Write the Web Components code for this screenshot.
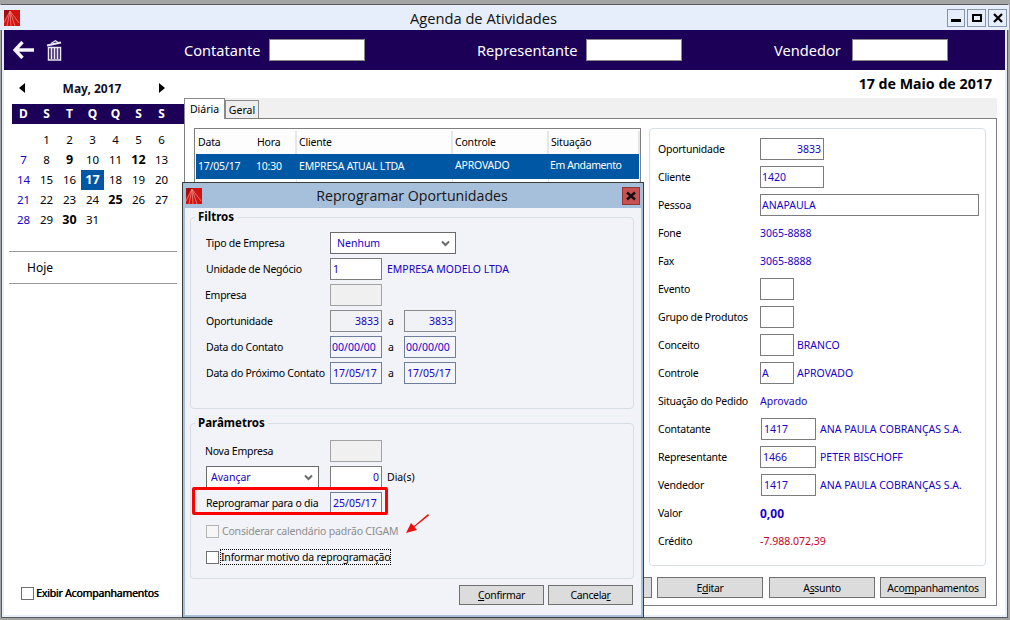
<!DOCTYPE html>
<html lang="pt">
<head>
<meta charset="utf-8">
<title>Agenda de Atividades</title>
<style>
  html, body { margin: 0; height: 100%; overflow: hidden; }
  body { background: #a4a4a4; font: 10.500px "Noto Sans", "Liberation Sans", sans-serif; color: #000; }
</style>
</head>
<body>
<app-window></app-window>
<script>
// Base: semua elemen pakai shadow root open
class Base extends HTMLElement {
  constructor() {
    super();
    this.attachShadow({ mode: 'open' });
  }
  connectedCallback() {
    this.shadowRoot.innerHTML = `<style>${this.css()}</style>${this.html()}`;
  }
  css() { return ''; }
  html() { return '<slot></slot>'; }
}

const BLUE = '#1a00c4';

class WinLogo extends Base {
  css() { return `:host { display: block; width: 16px; height: 16px; } svg { display: block; }`; }
  html() {
    return `<svg width="16" height="16" viewBox="0 0 16 16">
      <rect width="16" height="16" fill="#d2120f"/>
      <path d="M0 0h7L0 9z" fill="#a00e0e"/>
      <path d="M6 1 0 13M6 1 3 16M6 1 7 16M6 1l5 15M6 1l9 12" stroke="#ee8a84" stroke-width=".8" fill="none"/>
    </svg>`;
  }
}
customElements.define('win-logo', WinLogo);

class TextBox extends Base {
  css() {
    const a = n => this.getAttribute(n);
    return `:host {
        display: inline-flex; align-items: center; box-sizing: border-box; flex: none;
        width: ${a('w') || 52}px; height: 22px; padding: 0 ${a('pad') || 2}px;
        border: 1px solid ${a('edge') || '#7c7c7c'};
        background: ${a('bg') || '#fff'}; color: ${BLUE};
        justify-content: ${a('align') === 'right' ? 'flex-end' : 'flex-start'};
      }`;
  }
  html() { return `<span>${this.getAttribute('value') || ''}</span>`; }
}
customElements.define('text-box', TextBox);

class ComboBox extends Base {
  css() {
    return `:host {
        display: inline-flex; align-items: center; justify-content: space-between; box-sizing: border-box; flex: none;
        width: ${this.getAttribute('w')}px; height: 22px; padding: 0 5px 0 4px;
        border: 1px solid #6a6a6a; background: #fff; color: ${BLUE};
      }
      svg { display: block; }`;
  }
  html() {
    return `<span>${this.getAttribute('value')}</span>
      <svg width="9" height="7" viewBox="0 0 9 7"><path d="M1 1.500 4.500 5 8 1.500" fill="none" stroke="#6a6a6a" stroke-width="2"/></svg>`;
  }
}
customElements.define('combo-box', ComboBox);

class CheckBox extends Base {
  css() {
    const off = this.hasAttribute('off');
    return `:host { display: inline-flex; align-items: center; gap: ${off ? 3 : 2}px; color: ${off ? '#8e8e8e' : 'inherit'}; letter-spacing: -.2px; }
      i { display: block; box-sizing: border-box; width: 13px; height: 13px; background: ${off ? '#f6f6f6' : '#fff'}; border: 1px solid ${off ? '#b4b4b4' : '#707070'}; }
      span { ${this.hasAttribute('focus') ? 'outline: 1px dotted #000; outline-offset: 0;' : ''} }`;
  }
  html() { return `<i></i><span><slot></slot></span>`; }
}
customElements.define('check-box', CheckBox);

class PushButton extends Base {
  css() {
    return `:host {
        display: inline-flex; align-items: center; justify-content: center; box-sizing: border-box; flex: none;
        width: ${this.getAttribute('w')}px; height: ${this.getAttribute('h') || 21}px;
        background: #dcdcdc; border: 1px solid #707070; color: #000; letter-spacing: -.35px;
      }`;
  }
}
customElements.define('push-button', PushButton);

class TitleBar extends Base {
  css() {
    return `:host { display: flex; align-items: center; height: 25px; padding: 0 2px 0 4px; background: #e6eefb; }
      .title { flex: 1; text-align: center; font: 14.700px "Open Sans", "Noto Sans", sans-serif; color: #111; }
      .btns { display: flex; gap: 2px; }
      .btn { box-sizing: border-box; width: 19px; height: 18px; border: 1px solid #8494aa; display: flex; align-items: center; justify-content: center; }
      .btn:first-child { width: 18px; }
      svg { display: block; }`;
  }
  html() {
    return `<win-logo></win-logo>
      <div class="title">Agenda de Atividades</div>
      <div class="btns">
        <div class="btn"><svg width="10" height="10"><rect x="0" y="6" width="10" height="3"/></svg></div>
        <div class="btn"><svg width="10" height="10"><path d="M1 2h8v6H1z" fill="none" stroke="#000" stroke-width="2"/></svg></div>
        <div class="btn"><svg width="10" height="10"><path d="M1 1l8 8M9 1 1 9" stroke="#000" stroke-width="2.200"/></svg></div>
      </div>`;
  }
}
customElements.define('title-bar', TitleBar);

class TopBar extends Base {
  css() {
    return `:host { display: grid; grid-template-columns: 180px 293px 297px 1fr; align-items: center; height: 40px; background: #1c0057; color: #fff; font-size: 14.600px; }
      .icons { display: flex; align-items: center; gap: 12px; padding-left: 9px; }
      .group { display: flex; align-items: center; }
      .box { box-sizing: border-box; width: 96px; height: 22px; background: #fff; border: 1px solid #8a8a8a; }
      svg { display: block; }`;
  }
  html() {
    return `<div class="icons">
        <svg width="21" height="18" viewBox="0 0 21 18"><path d="M9.500 1 2 9l7.500 8M3 9h18" fill="none" stroke="#f4f4fa" stroke-width="3.400"/></svg>
        <svg width="17" height="21" viewBox="0 0 17 21" fill="none" stroke="#ebe8f4"><path d="M1 5.500 15 2.500" stroke-width="2"/><path d="M5 3.500 9.500 .8 12 2.500" stroke-width="1.200"/><path d="M2.500 7.500h12V20h-12z" stroke-width="1.500"/><path d="M5.500 8v11M8.500 8v11M11.500 8v11" stroke-width="1.700"/></svg>
      </div>
      <div class="group"><span style="width:85px">Contatante</span><div class="box"></div></div>
      <div class="group"><span style="width:109px">Representante</span><div class="box"></div></div>
      <div class="group"><span style="width:78px">Vendedor</span><div class="box"></div></div>`;
  }
}
customElements.define('top-bar', TopBar);

class CalPanel extends Base {
  css() {
    return `:host { display: flex; flex-direction: column; width: 180px; box-sizing: border-box; padding: 8px 0 15px; background: #fff; }
      .nav { display: flex; align-items: center; justify-content: space-between; height: 20px; width: 161px; margin: 0 0 6px 8px; padding: 0 8px 0 7px; box-sizing: border-box; font-weight: 700; font-size: 12px; color: #10102c; }
      .head, .days { display: grid; grid-template-columns: repeat(7, 23px); margin-left: 8px; text-align: center; }
      .head { height: 20px; line-height: 20px; background: #1c0057; color: #fff; font-weight: 700; font-size: 12px; }
      .days { margin-top: 6px; grid-auto-rows: 20px; line-height: 20px; font-size: 11.500px; }
      .sun { color: ${BLUE}; }
      .b { font-weight: 700; font-size: 12.500px; }
      .today { background: #0058a4; color: #fff; }
      .hoje { margin: 21px 0 0 5px; width: 168px; height: 31px; box-sizing: content-box; border: solid #9a9a9a; border-width: 1px 0; display: flex; align-items: center; padding-left: 0; font-size: 12px; }
      .hoje span { margin-left: 18px; }
      .grow { flex: 1; }
      .foot { margin-left: 17px; text-shadow: .4px 0 0 #000; }
      svg { display: block; }`;
  }
  html() {
    const bold = [9, 12, 17, 25, 30];
    let cells = '<span></span>';
    for (let d = 1; d <= 31; d++) {
      const cls = [];
      if ((d % 7) === 0) cls.push('sun');
      if (bold.includes(d)) cls.push('b');
      if (d === 17) cls.push('today');
      cells += `<span class="${cls.join(' ')}">${d}</span>`;
    }
    const head = ['D', 'S', 'T', 'Q', 'Q', 'S', 'S'].map(x => `<span>${x}</span>`).join('');
    return `<div class="nav">
        <svg width="7" height="10"><path d="M6 0v10L0 5z" fill="#000"/></svg>
        <span>May, 2017</span>
        <svg width="7" height="10"><path d="M1 0v10l6-5z" fill="#000"/></svg>
      </div>
      <div class="head">${head}</div>
      <div class="days">${cells}</div>
      <div class="hoje"><span>Hoje</span></div>
      <div class="grow"></div>
      <check-box class="foot">Exibir Acompanhamentos</check-box>`;
  }
}
customElements.define('cal-panel', CalPanel);

class AgendaTable extends Base {
  css() {
    return `:host { display: block; box-sizing: border-box; width: 447px; border: 1px solid #7f7f7f; padding: 2px 1px 0 1px; background: #fff; letter-spacing: -.2px; }
      .row { display: grid; grid-template-columns: 60px 41px 156px 96px 91px; }
      .hd { height: 23px; line-height: 22px; }
      .hd span { padding-left: 2px; background: #fdfdfd; border-right: 2px solid #e6e6e6; }
      .hd span:nth-child(1) { border-right: 0; }
      .hd span:nth-child(2) { padding-left: 1px; }
      .sel { height: 25px; background: #0058a4; color: #fff; line-height: 25px; }
      .sel span { padding-left: 2px; }
      .sel .hr { padding-left: 0; }
      .sel .up { line-height: 23px; }
      .sel .tight { letter-spacing: -.4px; padding-left: 1px; }
      .blank { height: 400px; display: grid; grid-template-columns: 60px 41px 156px 96px 91px; }
      .blank span { border-right: 1px solid #e6e6e6; }
      .blank span:nth-child(1) { border-right: 0; }`;
  }
  html() {
    return `<div class="row hd"><span>Data</span><span>Hora</span><span>Cliente</span><span>Controle</span><span>Situação</span></div>
      <div class="row sel"><span>17/05/17</span><span class="hr">10:30</span><span>EMPRESA ATUAL LTDA</span><span class="up">APROVADO</span><span class="up tight">Em Andamento</span></div>
      <div class="blank"><span></span><span></span><span></span><span></span><span></span></div>`;
  }
}
customElements.define('agenda-table', AgendaTable);

class DetailCard extends Base {
  css() {
    return `:host { display: grid; grid-template-columns: 102px 1fr; grid-auto-rows: 28px; align-items: center; box-sizing: border-box; width: 338px; height: 438px; padding: 6px 0 0 8px; background: #fff; border: 1px solid #d5dfe5; border-radius: 4px; }
      .val { display: flex; align-items: center; gap: 3px; color: ${BLUE}; }
      .wide { gap: 4px; }
      .red { color: #c8001e; }
      .lab { letter-spacing: -.25px; }
      b { font-size: 12px; }`;
  }
  html() {
    const row = (lab, val, cls = '') => `<span class="lab">${lab}</span><div class="val ${cls}">${val}</div>`;
    return [
      row('Oportunidade', '<text-box w="64" value="3833" align="right"></text-box>'),
      row('Cliente', '<text-box w="64" value="1420" pad="1"></text-box>'),
      row('Pessoa', '<text-box w="219" value="ANAPAULA" pad="1"></text-box>'),
      row('Fone', '3065-8888'),
      row('Fax', '3065-8888'),
      row('Evento', '<text-box w="34"></text-box>'),
      row('Grupo de Produtos', '<text-box w="34"></text-box>'),
      row('Conceito', '<text-box w="34"></text-box>BRANCO'),
      row('Controle', '<text-box w="34" value="A" pad="1"></text-box>APROVADO'),
      row('Situação do Pedido', 'Aprovado'),
      row('Contatante', '<text-box w="55" value="1417" style="margin-left:1px"></text-box>ANA PAULA COBRANÇAS S.A.', 'wide'),
      row('Representante', '<text-box w="56" value="1466"></text-box>PETER BISCHOFF', 'wide'),
      row('Vendedor', '<text-box w="55" value="1417" style="margin-left:1px"></text-box>ANA PAULA COBRANÇAS S.A.', 'wide'),
      row('Valor', '<b>0,00</b>'),
      row('Crédito', '-7.988.072,39', 'red')
    ].join('');
  }
}
customElements.define('detail-card', DetailCard);

class AgendaTabs extends Base {
  css() {
    return `:host { display: flex; flex-direction: column; flex: 1; min-width: 0; background: #fff; }
      .date { height: 28px; line-height: 28px; text-align: right; padding-right: 13px; font-weight: 700; font-size: 14.200px; }
      .tabs { display: flex; align-items: flex-end; height: 20px; margin-right: 8px; background: #f0f0f0; border-bottom: 1px solid #7f7f7f; }
      .tab { box-sizing: border-box; display: flex; align-items: center; justify-content: center; border: 1px solid #8a8a8a; }
      .on { width: 41px; height: 21px; background: #fff; border-bottom: 0; margin-bottom: -1px; position: relative; }
      .off { width: 34px; height: 18px; background: #eeeeee; border-bottom: 0; }
      .panel { box-sizing: border-box; height: 487px; margin-right: 8px; padding: 9px 10px 0 9px; border: solid #7f7f7f; border-width: 0 1px 1px 1px; }
      .top { display: flex; gap: 8px; height: 438px; overflow: hidden; }
      .btns { display: flex; justify-content: flex-end; gap: 5px; margin-top: 11px; }
      .btns push-button:nth-child(2) { margin-right: 1px; }`;
  }
  html() {
    return `<div class="date">17 de Maio de 2017</div>
      <div class="tabs"><div class="tab on">Diária</div><div class="tab off">Geral</div></div>
      <div class="panel">
        <div class="top"><agenda-table></agenda-table><detail-card></detail-card></div>
        <div class="btns">
          <push-button w="106"></push-button>
          <push-button w="106">E<u>d</u>itar</push-button>
          <push-button w="106">A<u>s</u>sunto</push-button>
          <push-button w="106">Aco<u>m</u>panhamentos</push-button>
        </div>
      </div>`;
  }
}
customElements.define('agenda-tabs', AgendaTabs);

class GroupBox extends Base {
  css() {
    return `:host { display: block; }
      fieldset { box-sizing: border-box; margin: 0 0 0 5px; width: 444px; height: ${this.getAttribute('h')}px; padding: ${this.getAttribute('top')}px 0 0 15px; border: 1px solid #d5dfe5; border-radius: 4px; }
      legend { margin-left: -11px; padding: 0 3px; height: 14px; line-height: 14px; font-weight: 700; font-size: 11.500px; }`;
  }
  html() { return `<fieldset><legend>${this.getAttribute('label')}</legend><slot></slot></fieldset>`; }
}
customElements.define('group-box', GroupBox);

class FormRow extends Base {
  css() {
    const c = this.getAttribute('h') || 26;
    return `:host { display: flex; align-items: center; height: ${c}px; position: relative; }
      .lab { width: calc(124px - var(--nudge, 0px)); margin-left: var(--nudge, 0px); flex: none; white-space: nowrap; letter-spacing: -.25px; }
      ::slotted(.a) { width: 22px; padding-right: 4px; box-sizing: border-box; text-align: center; }`;
  }
  html() {
    const lab = this.getAttribute('label');
    return `${lab !== null ? `<span class="lab">${lab}</span>` : ''}<slot></slot>`;
  }
}
customElements.define('form-row', FormRow);

class ReprogramDialog extends Base {
  css() {
    return `:host { position: absolute; left: 180px; top: 177px; box-sizing: border-box; width: 462px; height: 436px; border: 1px solid #3c3c3c; background: #a6bfdb; display: flex; flex-direction: column; padding: 0 2px 2px; }
      .bar { display: flex; align-items: center; height: 25px; flex: none; }
      .bar win-logo { margin-left: 1px; }
      .bar .t { flex: 1; text-align: center; font: 14.200px "Open Sans", "Noto Sans", sans-serif; color: #161616; }
      .x { width: 18px; height: 18px; box-sizing: border-box; margin-right: 1px; background: #c75050; border: 1px solid #8a3a3a; display: flex; align-items: center; justify-content: center; }
      .body { flex: 1; background: #f1f3f9; padding-top: 2px; }
      svg { display: block; }
      .bt { display: flex; justify-content: flex-end; gap: 4px; margin: 6px 0 0 0; padding-right: 8px; }
      .mark { position: absolute; left: -14px; top: -3px; width: 196px; height: 28px; box-sizing: border-box; border: 3px solid #f00; border-radius: 2px; pointer-events: none; }
      .arrow { position: absolute; left: 222px; top: 330px; }`;
  }
  html() {
    const slate = 'edge="#6e7f9a" bg="#f4f6fb"';
    const flat = 'align="right" bg="#f0f2f6" edge="#8a8a8a"';
    return `<div class="bar"><win-logo></win-logo><div class="t">Reprogramar Oportunidades</div>
        <div class="x"><svg width="10" height="10"><path d="M1 1.500l8 7M9 1.500l-8 7" stroke="#111" stroke-width="2.400"/></svg></div></div>
      <div class="body">
        <group-box label="Filtros" h="199" top="6">
          <form-row label="Tipo de Empresa"><combo-box w="126" value="Nenhum" style="padding-left:6px"></combo-box></form-row>
          <form-row label="Unidade de Negócio"><text-box value="1"></text-box><span style="color:${BLUE};margin-left:5px">EMPRESA MODELO LTDA</span></form-row>
          <form-row label="Empresa" style="--nudge:-1px"><text-box bg="#f0f0f0" edge="#a2a2a2"></text-box></form-row>
          <form-row label="Oportunidade"><text-box value="3833" ${flat}></text-box><span class="a">a</span><text-box value="3833" ${flat}></text-box></form-row>
          <form-row label="Data do Contato"><text-box value="00/00/00" ${slate} pad="1"></text-box><span class="a">a</span><text-box value="00/00/00" ${slate} pad="1"></text-box></form-row>
          <form-row label="Data do Próximo Contato"><text-box value="17/05/17" ${slate}></text-box><span class="a">a</span><text-box value="17/05/17" ${slate}></text-box></form-row>
        </group-box>
        <group-box label="Parâmetros" h="163" top="8" style="margin-top:7px">
          <form-row label="Nova Empresa" style="--nudge:-1px"><text-box bg="#f0f0f0" edge="#a2a2a2"></text-box></form-row>
          <form-row><combo-box w="113" value="Avançar"></combo-box><text-box value="0" align="right" style="margin-left:11px"></text-box><span style="margin-left:5px">Dia(s)</span></form-row>
          <form-row label="Reprogramar para o dia"><text-box value="25/05/17" ${slate}></text-box><div class="mark"></div></form-row>
          <form-row h="30"><check-box off>Considerar calendário padrão CIGAM</check-box></form-row>
          <form-row h="22"><check-box focus>Informar motivo da reprogramação</check-box></form-row>
        </group-box>
        <div class="bt">
          <push-button w="85" h="20"><u>C</u>onfirmar</push-button>
          <push-button w="85" h="20">Cancela<u>r</u></push-button>
        </div>
      </div>
      <svg class="arrow" width="24" height="21" viewBox="0 0 24 21"><path d="M23 1 9 13l-3-3-5 10 11-3-2.500-3L24 2.500z" fill="#ee1010"/></svg>`;
  }
}
customElements.define('reprogram-dialog', ReprogramDialog);

class AppWindow extends Base {
  css() {
    return `:host { display: block; position: relative; box-sizing: border-box; width: 1007px; height: 614px; margin: 4px 0 0 1px; border: 1px solid #5a5a5a; background: #e6eefb; }
      .inner { margin: 0 2px; display: flex; flex-direction: column; height: 585px; }
      title-bar { margin: 0 -2px; }
      .main { display: flex; flex: 1; min-height: 0; }`;
  }
  html() {
    return `<title-bar></title-bar>
      <div class="inner">
        <top-bar></top-bar>
        <div class="main"><cal-panel></cal-panel><agenda-tabs></agenda-tabs></div>
      </div>
      <reprogram-dialog></reprogram-dialog>`;
  }
}
customElements.define('app-window', AppWindow);
</script>
</body>
</html>
